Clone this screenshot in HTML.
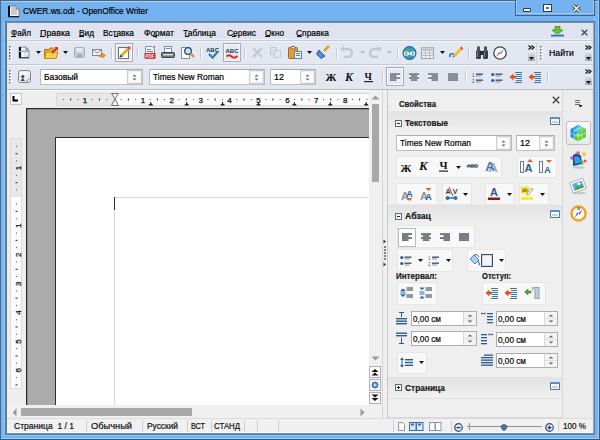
<!DOCTYPE html>
<html><head><meta charset="utf-8">
<style>
*{margin:0;padding:0;box-sizing:border-box}
html,body{width:600px;height:440px;overflow:hidden;background:#74b3f0}
body{position:relative;font-family:"Liberation Sans",sans-serif;font-size:9px;color:#000}
.a{position:absolute;display:block}
.t{position:absolute;white-space:nowrap;line-height:1;-webkit-text-stroke:0.2px currentColor}
</style></head><body>
<div class="a" style="left:0px;top:0px;width:600px;height:440px;background:#74b3f0"></div>
<div class="a" style="left:0px;top:0px;width:600px;height:1px;background:#4e6580"></div>
<div class="a" style="left:1px;top:1px;width:598px;height:1px;background:#a9d2fa"></div>
<div class="a" style="left:0px;top:0px;width:1px;height:440px;background:#4a6a90"></div>
<div class="a" style="left:3px;top:22px;width:2px;height:412px;background:#84c0fa"></div>
<div class="a" style="left:594px;top:16px;width:1px;height:418px;background:#88c6ff"></div>
<div class="a" style="left:598px;top:0px;width:1px;height:440px;background:#94ccff"></div>
<div class="a" style="left:599px;top:0px;width:1px;height:440px;background:#3a5a80"></div>
<div class="a" style="left:1px;top:435px;width:598px;height:1px;background:#84c4ff"></div>
<div class="a" style="left:1px;top:438px;width:598px;height:1px;background:#a0d0ff"></div>
<div class="a" style="left:0px;top:439px;width:600px;height:1px;background:#3a5a80"></div>
<div class="t" style="left:23px;top:7.38px;font-size:9px;color:#000;transform:scaleX(0.921);transform-origin:0 0;">CWER.ws.odt - OpenOffice Writer</div>
<div class="a" style="left:515px;top:0px;width:80px;height:16px;border:1px solid #46607e;border-top:none;background:#74b3f0"></div>
<div class="a" style="left:5px;top:21px;width:590px;height:414px;background:#5a80a8"></div>
<div class="a" style="left:6px;top:22px;width:588px;height:412px;background:#7090b4"></div>
<div class="a" style="left:7px;top:23px;width:586px;height:410px;background:#e3e7f2"></div>
<div class="a" style="left:6px;top:23px;width:1px;height:410px;background:#6c7278"></div>
<div class="a" style="left:7px;top:23px;width:586px;height:16px;background:#dfe3ef"></div>
<div class="t" style="left:11px;top:28.88px;font-size:9px;color:#000;transform:scaleX(0.904);transform-origin:0 0;">Файл</div>
<div class="t" style="left:40px;top:28.88px;font-size:9px;color:#000;transform:scaleX(0.987);transform-origin:0 0;">Правка</div>
<div class="t" style="left:79px;top:28.88px;font-size:9px;color:#000;transform:scaleX(0.921);transform-origin:0 0;">Вид</div>
<div class="t" style="left:103px;top:28.88px;font-size:9px;color:#000;transform:scaleX(0.927);transform-origin:0 0;">Вставка</div>
<div class="t" style="left:144px;top:28.88px;font-size:9px;color:#000;transform:scaleX(0.938);transform-origin:0 0;">Формат</div>
<div class="t" style="left:183px;top:28.88px;font-size:9px;color:#000;transform:scaleX(0.935);transform-origin:0 0;">Таблица</div>
<div class="t" style="left:227px;top:28.88px;font-size:9px;color:#000;transform:scaleX(0.941);transform-origin:0 0;">Сервис</div>
<div class="t" style="left:265px;top:28.88px;font-size:9px;color:#000;transform:scaleX(0.908);transform-origin:0 0;">Окно</div>
<div class="t" style="left:296px;top:28.88px;font-size:9px;color:#000;transform:scaleX(0.935);transform-origin:0 0;">Справка</div>
<div class="a" style="left:7px;top:39px;width:586px;height:1px;background:#eef0f8"></div>
<div class="a" style="left:7px;top:40px;width:586px;height:1px;background:#c6cad4"></div>
<div class="a" style="left:7px;top:41px;width:586px;height:1px;background:#f2f4fa"></div>
<div class="a" style="left:7px;top:42px;width:586px;height:22px;background:#e3e7f2"></div>
<div class="a" style="left:7px;top:64px;width:586px;height:1px;background:#c6cad4"></div>
<div class="a" style="left:7px;top:65px;width:586px;height:1px;background:#f4f6fb"></div>
<div class="a" style="left:7px;top:66px;width:586px;height:23px;background:#e3e7f2"></div>
<div class="a" style="left:7px;top:89px;width:586px;height:1px;background:#b8bbc0"></div>
<div class="a" style="left:7px;top:90px;width:586px;height:1px;background:#fdfdfd"></div>
<div class="a" style="left:7px;top:91px;width:375px;height:327px;background:#eeeeee"></div>
<div class="a" style="left:10px;top:93px;width:12px;height:12px;background:#fafafa;border:1px solid #c8c8c8"></div>
<div class="a" style="left:56px;top:93px;width:314px;height:13px;background:#fcfcfc;border:1px solid #d8d8d8"></div>
<div class="a" style="left:57px;top:94px;width:57px;height:11px;background:#e8e8e8"></div>
<div class="a" style="left:10px;top:138px;width:12px;height:251px;background:#fcfcfc;border:1px solid #dcdcdc"></div>
<div class="a" style="left:11px;top:139px;width:10px;height:58px;background:#e8e8e8"></div>
<div class="a" style="left:26px;top:108px;width:343px;height:297px;background:#ababab"></div>
<div class="a" style="left:26px;top:108px;width:343px;height:1px;background:#2a2a2a"></div>
<div class="a" style="left:26px;top:109px;width:343px;height:1px;background:#8a8a8a"></div>
<div class="a" style="left:26px;top:108px;width:1px;height:297px;background:#2a2a2a"></div>
<div class="a" style="left:27px;top:109px;width:1px;height:296px;background:#8a8a8a"></div>
<div class="a" style="left:55px;top:137px;width:314px;height:268px;background:#ffffff"></div>
<div class="a" style="left:55px;top:137px;width:314px;height:1px;background:#2e2e2e"></div>
<div class="a" style="left:55px;top:137px;width:1px;height:268px;background:#2e2e2e"></div>
<div class="a" style="left:114px;top:197px;width:255px;height:1px;background:#d6d6d6"></div>
<div class="a" style="left:114px;top:197px;width:1px;height:208px;background:#d6d6d6"></div>
<div class="a" style="left:114px;top:197px;width:1px;height:13px;background:#303030"></div>
<div class="a" style="left:369px;top:90px;width:13px;height:328px;background:#f0f0f0"></div>
<div class="a" style="left:372px;top:104px;width:7px;height:78px;background:#a8a8a8"></div>
<div class="a" style="left:7px;top:405px;width:362px;height:13px;background:#f0f0f0"></div>
<div class="a" style="left:21px;top:408px;width:171px;height:8px;background:#a8a8a8"></div>
<div class="a" style="left:382px;top:90px;width:211px;height:328px;background:#f0f0f0"></div>
<div class="a" style="left:382px;top:90px;width:1px;height:328px;background:#d4d4d4"></div>
<div class="a" style="left:387px;top:90px;width:1px;height:328px;background:#c8c8c8"></div>
<div class="a" style="left:388px;top:90px;width:175px;height:327px;background:#efefef"></div>
<div class="a" style="left:562px;top:90px;width:1px;height:328px;background:#d8d8d8"></div>
<div class="a" style="left:563px;top:90px;width:30px;height:328px;background:#ececec"></div>
<div class="a" style="left:592px;top:90px;width:1px;height:328px;background:#e4e4e4"></div>
<div class="a" style="left:593px;top:23px;width:1px;height:410px;background:#9aa8b8"></div>
<div class="a" style="left:388px;top:417px;width:175px;height:1px;background:#d8d8d8"></div>
<div class="t" style="left:399px;top:99.88px;font-size:9px;color:#1a1a1a;font-weight:bold;transform:scaleX(0.865);transform-origin:0 0;">Свойства</div>
<div class="a" style="left:388px;top:111px;width:174px;height:20px;background:linear-gradient(#e2e2e2,#f0f0f0)"></div>
<div class="a" style="left:395px;top:120px;width:7px;height:7px;border:1px solid #5a6a80;background:#f8f8f8"></div>
<div class="a" style="left:397px;top:123px;width:3px;height:1px;background:#1a2a40"></div>
<div class="t" style="left:405px;top:119.38px;font-size:9px;color:#1a1a1a;font-weight:bold;transform:scaleX(0.906);transform-origin:0 0;">Текстовые</div>
<div class="a" style="left:550px;top:117px;width:10px;height:8px;border:1px solid #5a74a8;border-top:2px solid #5a8ad8;background:#fafcff;border-radius:1px"></div>
<div class="a" style="left:552px;top:121px;width:6px;height:2px;background:#c8d0dc"></div>
<div class="a" style="left:388px;top:205px;width:174px;height:20px;background:linear-gradient(#e2e2e2,#f0f0f0)"></div>
<div class="a" style="left:395px;top:213px;width:7px;height:7px;border:1px solid #5a6a80;background:#f8f8f8"></div>
<div class="a" style="left:397px;top:216px;width:3px;height:1px;background:#1a2a40"></div>
<div class="t" style="left:405px;top:212.38px;font-size:9px;color:#1a1a1a;font-weight:bold;transform:scaleX(0.973);transform-origin:0 0;">Абзац</div>
<div class="a" style="left:550px;top:210px;width:10px;height:8px;border:1px solid #5a74a8;border-top:2px solid #5a8ad8;background:#fafcff;border-radius:1px"></div>
<div class="a" style="left:552px;top:214px;width:6px;height:2px;background:#c8d0dc"></div>
<div class="a" style="left:388px;top:377px;width:174px;height:20px;background:linear-gradient(#e2e2e2,#f0f0f0)"></div>
<div class="a" style="left:395px;top:384px;width:7px;height:7px;border:1px solid #5a6a80;background:#f8f8f8"></div>
<div class="a" style="left:397px;top:387px;width:3px;height:1px;background:#1a2a40"></div>
<div class="a" style="left:398px;top:386px;width:1px;height:3px;background:#1a2a40"></div>
<div class="t" style="left:405px;top:384.38px;font-size:9px;color:#1a1a1a;font-weight:bold;transform:scaleX(0.930);transform-origin:0 0;">Страница</div>
<div class="a" style="left:550px;top:382px;width:10px;height:8px;border:1px solid #5a74a8;border-top:2px solid #5a8ad8;background:#fafcff;border-radius:1px"></div>
<div class="a" style="left:552px;top:386px;width:6px;height:2px;background:#c8d0dc"></div>
<div class="a" style="left:388px;top:398px;width:174px;height:1px;background:#e2e2e2"></div>
<div class="a" style="left:7px;top:418px;width:586px;height:15px;background:#f0f0f0"></div>
<div class="a" style="left:7px;top:432px;width:586px;height:1px;background:#fcfcfc"></div>
<div class="a" style="left:7px;top:418px;width:586px;height:1px;background:#dcdcdc"></div>
<div class="a" style="left:86px;top:420px;width:1px;height:12px;background:#cdd0d4"></div>
<div class="a" style="left:142px;top:420px;width:1px;height:12px;background:#cdd0d4"></div>
<div class="a" style="left:187px;top:420px;width:1px;height:12px;background:#cdd0d4"></div>
<div class="a" style="left:211px;top:420px;width:1px;height:12px;background:#cdd0d4"></div>
<div class="a" style="left:244px;top:420px;width:1px;height:12px;background:#cdd0d4"></div>
<div class="a" style="left:257px;top:420px;width:1px;height:12px;background:#cdd0d4"></div>
<div class="a" style="left:278px;top:420px;width:1px;height:12px;background:#cdd0d4"></div>
<div class="a" style="left:393px;top:420px;width:1px;height:12px;background:#cdd0d4"></div>
<div class="a" style="left:451px;top:420px;width:1px;height:12px;background:#cdd0d4"></div>
<div class="a" style="left:558px;top:420px;width:1px;height:12px;background:#cdd0d4"></div>
<div class="t" style="left:14px;top:422.38px;font-size:9px;color:#101010;transform:scaleX(0.948);transform-origin:0 0;">Страница&nbsp; 1 / 1</div>
<div class="t" style="left:91px;top:422.38px;font-size:9px;color:#101010;transform:scaleX(1.031);transform-origin:0 0;">Обычный</div>
<div class="t" style="left:147px;top:422.38px;font-size:9px;color:#101010;transform:scaleX(0.928);transform-origin:0 0;">Русский</div>
<div class="t" style="left:191px;top:422.38px;font-size:9px;color:#101010;transform:scaleX(0.804);transform-origin:0 0;">ВСТ</div>
<div class="t" style="left:214px;top:422.38px;font-size:9px;color:#101010;transform:scaleX(0.867);transform-origin:0 0;">СТАНД</div>
<div class="t" style="left:563px;top:422.38px;font-size:9px;color:#101010;transform:scaleX(0.901);transform-origin:0 0;">100 %</div>
<div class="a" style="left:9px;top:46px;width:2px;height:2px;background:linear-gradient(135deg,#5a5e66 50%,#b8bcc4 50%);box-shadow:1px 1px 0 #fff"></div>
<div class="a" style="left:9px;top:49px;width:2px;height:2px;background:linear-gradient(135deg,#5a5e66 50%,#b8bcc4 50%);box-shadow:1px 1px 0 #fff"></div>
<div class="a" style="left:9px;top:52px;width:2px;height:2px;background:linear-gradient(135deg,#5a5e66 50%,#b8bcc4 50%);box-shadow:1px 1px 0 #fff"></div>
<div class="a" style="left:9px;top:55px;width:2px;height:2px;background:linear-gradient(135deg,#5a5e66 50%,#b8bcc4 50%);box-shadow:1px 1px 0 #fff"></div>
<div class="a" style="left:9px;top:58px;width:2px;height:2px;background:linear-gradient(135deg,#5a5e66 50%,#b8bcc4 50%);box-shadow:1px 1px 0 #fff"></div>
<svg class="a" style="left:18px;top:46px;" width="12" height="13" viewBox="0 0 12 13"><path d="M1 1H8L11 4V12H1Z" fill="#d8e0ea" stroke="#7a8490" stroke-width="0.8"/><rect x="1" y="1" width="2" height="4" fill="#0a1018"/><rect x="1" y="6" width="2" height="6" fill="#0a1018"/><rect x="1" y="11.2" width="10" height="1" fill="#303840"/><rect x="3.5" y="2" width="4" height="1.5" fill="#f8f8f8"/><rect x="3.5" y="6.5" width="2.5" height="4.5" fill="#f8f8f8"/><rect x="7" y="7" width="3" height="2" fill="#f0f4f8"/><path d="M8 1V4H11" fill="#a8b0b8" stroke="#7a8490" stroke-width="0.8"/><path d="M3 5.5L10 5.5" stroke="#8a949e" stroke-width="0.8"/></svg>
<svg class="a" style="left:36px;top:51px;" width="5" height="3" viewBox="0 0 5 3"><path d="M0 0H5L2.5 3Z" fill="#111"/></svg>
<svg class="a" style="left:44px;top:46px;" width="15" height="13" viewBox="0 0 15 13"><path d="M0.5 3.5H5L6 2H9V12.5H0.5Z" fill="#e2b030" stroke="#b07810"/><path d="M2 6H14L12 12.5H0.5Z" fill="#f8d050" stroke="#c08818"/><path d="M8 7L13 2" stroke="#e03010" stroke-width="2"/><path d="M10 1H14V5Z" fill="#e03010"/></svg>
<svg class="a" style="left:63px;top:51px;" width="5" height="3" viewBox="0 0 5 3"><path d="M0 0H5L2.5 3Z" fill="#111"/></svg>
<svg class="a" style="left:74px;top:47px;" width="11" height="11" viewBox="0 0 11 11"><rect x="0.5" y="0.5" width="10" height="10" rx="1" fill="#c8ccd4" stroke="#a8acb4"/><rect x="2.5" y="1" width="6" height="4" fill="#e8eaee"/><rect x="3" y="7" width="5" height="3.5" fill="#a8acb4"/></svg>
<svg class="a" style="left:92px;top:49px;" width="14" height="10" viewBox="0 0 14 10"><rect x="0.5" y="0.5" width="9" height="6" fill="#f0f0f0" stroke="#808890"/><path d="M0.5 0.5L5 4L9.5 0.5" fill="none" stroke="#808890"/><path d="M7 6H10V4L13.5 6.5L10 9V7.5H7Z" fill="#f0a020" stroke="#c07000" stroke-width="0.6"/></svg>
<div class="a" style="left:111px;top:48px;width:1px;height:11px;background:#c4c8d2;box-shadow:1px 0 0 #fff"></div>
<div class="a" style="left:115px;top:43px;width:18px;height:19px;border:1px solid #a8acb8;background:#e6e9f1;box-shadow:inset 0 0 0 1px #f8f9fc"></div>
<svg class="a" style="left:117px;top:46px;" width="14" height="13" viewBox="0 0 14 13"><rect x="1.5" y="1.5" width="10" height="11" fill="#fafafa" stroke="#6a7480"/><rect x="3" y="9" width="3" height="2" fill="#3060b0"/><path d="M4 10L11 3" stroke="#e0b020" stroke-width="3"/><path d="M11 3L13 1" stroke="#e04060" stroke-width="3"/><path d="M3 11L4.5 9.5" stroke="#303030" stroke-width="1.5"/></svg>
<div class="a" style="left:137px;top:48px;width:1px;height:11px;background:#c4c8d2;box-shadow:1px 0 0 #fff"></div>
<svg class="a" style="left:144px;top:46px;" width="12" height="13" viewBox="0 0 12 13"><path d="M1.5 0.5H8L10.5 3V12.5H1.5Z" fill="#fff" stroke="#8090a0"/><rect x="3" y="3" width="4" height="1" fill="#5080c0"/><rect x="3" y="5" width="6" height="1" fill="#5080c0"/><rect x="0.5" y="7" width="11" height="5.5" fill="#d42020"/><path d="M9 0H11V2Z" fill="#e02020"/><text x="6" y="11.6" font-size="4.5" font-family="Liberation Sans" font-weight="bold" fill="#fff" text-anchor="middle">PDF</text></svg>
<svg class="a" style="left:161px;top:46px;" width="14" height="13" viewBox="0 0 14 13"><rect x="3.5" y="0.5" width="7" height="6" fill="#fff" stroke="#8090a0"/><rect x="4.5" y="2" width="5" height="1" fill="#6090c8"/><rect x="0.5" y="6.5" width="13" height="5" rx="1" fill="#707478" stroke="#404448"/><rect x="2" y="8" width="10" height="1.5" fill="#d8dadc"/><rect x="10" y="9.5" width="2" height="1" fill="#40c040"/></svg>
<svg class="a" style="left:180px;top:46px;" width="15" height="13" viewBox="0 0 15 13"><rect x="1.5" y="1.5" width="8" height="11" fill="#fafafa" stroke="#8a94a0"/><circle cx="8" cy="5" r="3.3" fill="#c8e0f4" stroke="#2a4a6a" stroke-width="1.3"/><path d="M10.3 7.3L14 11" stroke="#d09020" stroke-width="2"/></svg>
<div class="a" style="left:200px;top:48px;width:1px;height:11px;background:#c4c8d2;box-shadow:1px 0 0 #fff"></div>
<svg class="a" style="left:205px;top:46px;" width="15" height="13" viewBox="0 0 15 13"><text x="7.5" y="5.5" font-size="6" font-family="Liberation Sans" font-weight="bold" fill="#223344" text-anchor="middle">ABC</text><path d="M4 8L7.5 11.5L13 5.5" fill="none" stroke="#1060b0" stroke-width="2"/><path d="M4.5 8.3L7.5 11L12.5 5.8" fill="none" stroke="#40c0f0" stroke-width="0.8"/></svg>
<div class="a" style="left:223px;top:43px;width:18px;height:19px;border:1px solid #a8acb8;background:#e6e9f1;box-shadow:inset 0 0 0 1px #f8f9fc"></div>
<svg class="a" style="left:225px;top:47px;" width="14" height="12" viewBox="0 0 14 12"><text x="7" y="5.8" font-size="6" font-family="Liberation Sans" font-weight="bold" fill="#223344" text-anchor="middle">ABC</text><path d="M1.5 9.5Q4 7 6.5 9.5Q9 12 12.5 9" fill="none" stroke="#e02010" stroke-width="1.8"/></svg>
<div class="a" style="left:244px;top:48px;width:1px;height:11px;background:#c4c8d2;box-shadow:1px 0 0 #fff"></div>
<svg class="a" style="left:251px;top:47px;" width="13" height="11" viewBox="0 0 13 11"><path d="M2 1L11 10M11 1L2 10" stroke="#c4c8d0" stroke-width="2.4"/></svg>
<svg class="a" style="left:270px;top:47px;" width="12" height="11" viewBox="0 0 12 11"><rect x="0.5" y="0.5" width="6" height="7" fill="#dcdfe4" stroke="#c4c8d0"/><rect x="4.5" y="3.5" width="6" height="7" fill="#e4e6ea" stroke="#c4c8d0"/></svg>
<svg class="a" style="left:288px;top:46px;" width="14" height="13" viewBox="0 0 14 13"><rect x="0.5" y="1.5" width="9" height="11" rx="1" fill="#e0a030" stroke="#a06818"/><rect x="3" y="0.5" width="4" height="2.5" rx="0.8" fill="#f0f0f0" stroke="#606468"/><rect x="6.5" y="5.5" width="7" height="7" fill="#f0f6fc" stroke="#6080a8"/><rect x="8" y="7" width="4" height="1" fill="#4a80c0"/><rect x="8" y="9" width="4" height="1" fill="#4a80c0"/></svg>
<svg class="a" style="left:307px;top:51px;" width="5" height="3" viewBox="0 0 5 3"><path d="M0 0H5L2.5 3Z" fill="#111"/></svg>
<svg class="a" style="left:316px;top:45px;" width="14" height="14" viewBox="0 0 14 14"><path d="M8 6L13 1" stroke="#e0a020" stroke-width="2.5"/><path d="M3 5L9 11L5 13.5L0.5 9Z" fill="#3a78d0" stroke="#1a50a0" stroke-width="0.8"/><path d="M2 8L6 12M3.5 6.5L7.5 10.5" stroke="#a0c8f0" stroke-width="0.7"/></svg>
<div class="a" style="left:336px;top:48px;width:1px;height:11px;background:#c4c8d2;box-shadow:1px 0 0 #fff"></div>
<svg class="a" style="left:340px;top:46px;" width="14" height="12" viewBox="0 0 14 12"><path d="M3 3H8A4 4 0 0 1 8 11H4" fill="none" stroke="#c4c8d0" stroke-width="2.4"/><path d="M0 3L4 0V6Z" fill="#c4c8d0"/></svg>
<svg class="a" style="left:360px;top:51px;" width="5" height="3" viewBox="0 0 5 3"><path d="M0 0H5L2.5 3Z" fill="#b8bcc4"/></svg>
<svg class="a" style="left:368px;top:46px;" width="14" height="12" viewBox="0 0 14 12"><path d="M11 3H6A4 4 0 0 0 6 11H10" fill="none" stroke="#c4c8d0" stroke-width="2.4"/><path d="M14 3L10 0V6Z" fill="#c4c8d0"/></svg>
<svg class="a" style="left:387px;top:51px;" width="5" height="3" viewBox="0 0 5 3"><path d="M0 0H5L2.5 3Z" fill="#b8bcc4"/></svg>
<div class="a" style="left:397px;top:48px;width:1px;height:11px;background:#c4c8d2;box-shadow:1px 0 0 #fff"></div>
<svg class="a" style="left:402px;top:46px;" width="15" height="14" viewBox="0 0 15 14"><circle cx="7.5" cy="7" r="6.5" fill="#3a90c8" stroke="#1a5a88"/><path d="M3 4Q6 2 8 4T13 5" fill="#70c030"/><path d="M2 9Q5 12 9 10" fill="#60b030"/><rect x="2.5" y="6" width="4" height="3" rx="1" fill="none" stroke="#fff" stroke-width="1.2"/><rect x="8.5" y="6" width="4" height="3" rx="1" fill="none" stroke="#fff" stroke-width="1.2"/><path d="M5 7.5H10" stroke="#fff"/></svg>
<svg class="a" style="left:421px;top:47px;" width="13" height="12" viewBox="0 0 13 12"><rect x="0.5" y="0.5" width="12" height="11" fill="#f4f4f4" stroke="#9ca0a8"/><path d="M0.5 3.5H12.5M0.5 6H12.5M0.5 8.5H12.5M4.5 0.5V11.5M8.5 0.5V11.5" stroke="#a8acb4" stroke-width="0.8"/><rect x="0.5" y="0.5" width="12" height="3" fill="#c8ccd2"/></svg>
<svg class="a" style="left:440px;top:51px;" width="5" height="3" viewBox="0 0 5 3"><path d="M0 0H5L2.5 3Z" fill="#111"/></svg>
<svg class="a" style="left:449px;top:46px;" width="14" height="13" viewBox="0 0 14 13"><path d="M1 11Q0 7 4 8Q6 9 4 11" fill="none" stroke="#2a70d0" stroke-width="1.6"/><path d="M5 10L12 3" stroke="#f0c020" stroke-width="3"/><path d="M12 3L13.5 1.5" stroke="#e04060" stroke-width="3"/></svg>
<div class="a" style="left:468px;top:48px;width:1px;height:11px;background:#c4c8d2;box-shadow:1px 0 0 #fff"></div>
<svg class="a" style="left:475px;top:46px;" width="14" height="13" viewBox="0 0 14 13"><rect x="1" y="4" width="5" height="9" rx="1.5" fill="#3a3c40"/><rect x="8" y="4" width="5" height="9" rx="1.5" fill="#3a3c40"/><rect x="2" y="0.5" width="3" height="5" fill="#505458"/><rect x="9" y="0.5" width="3" height="5" fill="#505458"/><rect x="5" y="5" width="4" height="4" fill="#2a2c30"/><rect x="1.8" y="6" width="1" height="5" fill="#8a8e94"/><rect x="8.8" y="6" width="1" height="5" fill="#8a8e94"/></svg>
<svg class="a" style="left:493px;top:46px;" width="14" height="14" viewBox="0 0 14 14"><circle cx="7" cy="7" r="6.2" fill="#f8f8f8" stroke="#404850" stroke-width="1.3"/><path d="M7 7L11 3L8 8Z" fill="#2a60d0"/><path d="M7 7L3 11L6 6Z" fill="#e02020"/></svg>
<svg class="a" style="left:528px;top:45px;" width="7" height="5" viewBox="0 0 7 5"><path d="M0.5 0.5L3 2.5L0.5 4.5M3.5 0.5L6 2.5L3.5 4.5" fill="none" stroke="#111" stroke-width="1.2"/></svg>
<div class="a" style="left:528px;top:53px;width:7px;height:8px;background:linear-gradient(#d8dade,#a8acb2)"></div>
<svg class="a" style="left:529px;top:57px;" width="5" height="3" viewBox="0 0 5 3"><path d="M0 0H5L2.5 3Z" fill="#111"/></svg>
<div class="a" style="left:536px;top:42px;width:1px;height:23px;background:#cfd3dc"></div>
<div class="a" style="left:540px;top:46px;width:2px;height:2px;background:linear-gradient(135deg,#5a5e66 50%,#b8bcc4 50%);box-shadow:1px 1px 0 #fff"></div>
<div class="a" style="left:540px;top:49px;width:2px;height:2px;background:linear-gradient(135deg,#5a5e66 50%,#b8bcc4 50%);box-shadow:1px 1px 0 #fff"></div>
<div class="a" style="left:540px;top:52px;width:2px;height:2px;background:linear-gradient(135deg,#5a5e66 50%,#b8bcc4 50%);box-shadow:1px 1px 0 #fff"></div>
<div class="a" style="left:540px;top:55px;width:2px;height:2px;background:linear-gradient(135deg,#5a5e66 50%,#b8bcc4 50%);box-shadow:1px 1px 0 #fff"></div>
<div class="a" style="left:540px;top:58px;width:2px;height:2px;background:linear-gradient(135deg,#5a5e66 50%,#b8bcc4 50%);box-shadow:1px 1px 0 #fff"></div>
<div class="t" style="left:549px;top:49.38px;font-size:9px;color:#000;transform:scaleX(0.973);transform-origin:0 0;">Найти</div>
<svg class="a" style="left:585px;top:45px;" width="7" height="5" viewBox="0 0 7 5"><path d="M0.5 0.5L3 2.5L0.5 4.5M3.5 0.5L6 2.5L3.5 4.5" fill="none" stroke="#111" stroke-width="1.2"/></svg>
<div class="a" style="left:585px;top:53px;width:7px;height:8px;background:linear-gradient(#d8dade,#a8acb2)"></div>
<svg class="a" style="left:586px;top:57px;" width="5" height="3" viewBox="0 0 5 3"><path d="M0 0H5L2.5 3Z" fill="#111"/></svg>
<div class="a" style="left:9px;top:70px;width:2px;height:2px;background:linear-gradient(135deg,#5a5e66 50%,#b8bcc4 50%);box-shadow:1px 1px 0 #fff"></div>
<div class="a" style="left:9px;top:73px;width:2px;height:2px;background:linear-gradient(135deg,#5a5e66 50%,#b8bcc4 50%);box-shadow:1px 1px 0 #fff"></div>
<div class="a" style="left:9px;top:76px;width:2px;height:2px;background:linear-gradient(135deg,#5a5e66 50%,#b8bcc4 50%);box-shadow:1px 1px 0 #fff"></div>
<div class="a" style="left:9px;top:79px;width:2px;height:2px;background:linear-gradient(135deg,#5a5e66 50%,#b8bcc4 50%);box-shadow:1px 1px 0 #fff"></div>
<div class="a" style="left:9px;top:82px;width:2px;height:2px;background:linear-gradient(135deg,#5a5e66 50%,#b8bcc4 50%);box-shadow:1px 1px 0 #fff"></div>
<svg class="a" style="left:18px;top:70px;" width="13" height="13" viewBox="0 0 13 13"><rect x="0.5" y="0.5" width="12" height="12" rx="2" fill="#e8eaee" stroke="#808890"/><rect x="2" y="2" width="9" height="3" fill="#f8f8f8"/><circle cx="4.8" cy="6.5" r="1.5" fill="#404448"/><path d="M2.5 11L4.8 8L7 11Z" fill="#404448"/><path d="M8 12L12 8" stroke="#808890"/></svg>
<div class="a" style="left:40px;top:69px;width:103px;height:16px;background:#fff;border:1px solid #b9bcc2;border-top-color:#a9acb2"></div>
<div class="a" style="left:127px;top:70px;width:15px;height:14px;background:#fcfcfc;border:1px solid #cfcfcf;box-shadow:inset 0 0 0 1px #eeeeee"></div>
<svg class="a" style="left:132.0px;top:73.5px;" width="5" height="7" viewBox="0 0 5 7"><path d="M0.5 2.5L2.5 0.5L4.5 2.5Z" fill="#666"/><path d="M0.5 4.5L2.5 6.5L4.5 4.5Z" fill="#666"/></svg>
<div class="t" style="left:44px;top:73.38px;font-size:9px;color:#000;transform:scaleX(0.941);transform-origin:0 0;">Базовый</div>
<div class="a" style="left:149px;top:69px;width:116px;height:16px;background:#fff;border:1px solid #b9bcc2;border-top-color:#a9acb2"></div>
<div class="a" style="left:249px;top:70px;width:15px;height:14px;background:#fcfcfc;border:1px solid #cfcfcf;box-shadow:inset 0 0 0 1px #eeeeee"></div>
<svg class="a" style="left:254.0px;top:73.5px;" width="5" height="7" viewBox="0 0 5 7"><path d="M0.5 2.5L2.5 0.5L4.5 2.5Z" fill="#666"/><path d="M0.5 4.5L2.5 6.5L4.5 4.5Z" fill="#666"/></svg>
<div class="t" style="left:153px;top:73.38px;font-size:9px;color:#000;transform:scaleX(0.932);transform-origin:0 0;">Times New Roman</div>
<div class="a" style="left:270px;top:69px;width:46px;height:16px;background:#fff;border:1px solid #b9bcc2;border-top-color:#a9acb2"></div>
<div class="a" style="left:300px;top:70px;width:15px;height:14px;background:#fcfcfc;border:1px solid #cfcfcf;box-shadow:inset 0 0 0 1px #eeeeee"></div>
<svg class="a" style="left:305.0px;top:73.5px;" width="5" height="7" viewBox="0 0 5 7"><path d="M0.5 2.5L2.5 0.5L4.5 2.5Z" fill="#666"/><path d="M0.5 4.5L2.5 6.5L4.5 4.5Z" fill="#666"/></svg>
<div class="t" style="left:274px;top:73.38px;font-size:9px;color:#000;transform:scaleX(0.999);transform-origin:0 0;">12</div>
<svg class="a" style="left:325px;top:72px;" width="12" height="10" viewBox="0 0 12 10"><text x="6" y="9" font-size="11" font-family="Liberation Serif" font-weight="bold" fill="#111" text-anchor="middle">Ж</text></svg>
<svg class="a" style="left:345px;top:71px;" width="11" height="11" viewBox="0 0 11 11"><text x="0" y="10" font-size="12" font-family="Liberation Serif" font-style="italic" font-weight="bold" fill="#111">K</text></svg>
<svg class="a" style="left:364px;top:70px;" width="10" height="13" viewBox="0 0 10 13"><text x="0.5" y="9.5" font-size="10" font-family="Liberation Serif" font-weight="bold" fill="#111">Ч</text><rect x="0" y="11" width="9" height="1.2" fill="#222"/></svg>
<div class="a" style="left:382px;top:71px;width:1px;height:12px;background:#c4c8d2;box-shadow:1px 0 0 #fff"></div>
<div class="a" style="left:386px;top:67px;width:18px;height:19px;border:1px solid #a8acb8;background:#e6e9f1;box-shadow:inset 0 0 0 1px #f8f9fc"></div>
<svg class="a" style="left:390px;top:73px;" width="10" height="8" viewBox="0 0 10 8"><rect x="0" y="0" width="10" height="8" fill="#fff" opacity="0.7"/><rect x="0" y="0.3" width="10" height="1.5" fill="#646c76"/><rect x="0" y="2.3" width="6.5" height="1.5" fill="#646c76"/><rect x="0" y="4.3" width="10" height="1.5" fill="#646c76"/><rect x="0" y="6.3" width="6.5" height="1.5" fill="#646c76"/></svg>
<svg class="a" style="left:409px;top:73px;" width="10" height="8" viewBox="0 0 10 8"><rect x="0" y="0" width="10" height="8" fill="#fff" opacity="0.7"/><rect x="0" y="0.3" width="10" height="1.5" fill="#646c76"/><rect x="1.8" y="2.3" width="6.5" height="1.5" fill="#646c76"/><rect x="0" y="4.3" width="10" height="1.5" fill="#646c76"/><rect x="1.8" y="6.3" width="6.5" height="1.5" fill="#646c76"/></svg>
<svg class="a" style="left:428px;top:73px;" width="10" height="8" viewBox="0 0 10 8"><rect x="0" y="0" width="10" height="8" fill="#fff" opacity="0.7"/><rect x="0" y="0.3" width="10" height="1.5" fill="#646c76"/><rect x="3.5" y="2.3" width="6.5" height="1.5" fill="#646c76"/><rect x="0" y="4.3" width="10" height="1.5" fill="#646c76"/><rect x="3.5" y="6.3" width="6.5" height="1.5" fill="#646c76"/></svg>
<svg class="a" style="left:448px;top:73px;" width="10" height="8" viewBox="0 0 10 8"><rect x="0" y="0" width="10" height="8" fill="#fff" opacity="0.7"/><rect x="0" y="0.3" width="10" height="1.5" fill="#646c76"/><rect x="0" y="2.3" width="10" height="1.5" fill="#646c76"/><rect x="0" y="4.3" width="10" height="1.5" fill="#646c76"/><rect x="0" y="6.3" width="10" height="1.5" fill="#646c76"/></svg>
<div class="a" style="left:465px;top:71px;width:1px;height:12px;background:#c4c8d2;box-shadow:1px 0 0 #fff"></div>
<svg class="a" style="left:472px;top:72px;" width="12" height="11" viewBox="0 0 12 11"><text x="0" y="4.5" font-size="4.5" font-family="Liberation Sans" fill="#2a60a0">1</text><text x="0" y="10.5" font-size="4.5" font-family="Liberation Sans" fill="#2a60a0">2</text><rect x="4" y="1.5" width="7" height="1.4" fill="#4a5460"/><rect x="4" y="3.5" width="5" height="1" fill="#8a94a0"/><rect x="4" y="7.5" width="7" height="1.4" fill="#4a5460"/><rect x="4" y="9.5" width="5" height="1" fill="#8a94a0"/></svg>
<svg class="a" style="left:491px;top:72px;" width="12" height="11" viewBox="0 0 12 11"><circle cx="1.8" cy="2.5" r="1.6" fill="#2a5a90"/><circle cx="1.8" cy="8.5" r="1.6" fill="#2a5a90"/><rect x="4.5" y="1.5" width="7" height="1.4" fill="#4a5460"/><rect x="4.5" y="3.5" width="5" height="1" fill="#8a94a0"/><rect x="4.5" y="7.5" width="7" height="1.4" fill="#4a5460"/><rect x="4.5" y="9.5" width="5" height="1" fill="#8a94a0"/></svg>
<svg class="a" style="left:509px;top:71px;" width="14" height="12" viewBox="0 0 14 12"><path d="M0.5 6L4.5 2.5V9.5Z" fill="#e05010"/><rect x="3" y="4.8" width="4" height="2.4" fill="#e05010"/><path d="M6 1.5H13M7 3.5H13M7 5.5H13M7 7.5H13M7 9.5H13M6 11.5H13" stroke="#2a80d0" stroke-width="1"/><path d="M6 1.5H13M6 11.5H13" stroke="#606870" stroke-width="1"/></svg>
<svg class="a" style="left:528px;top:71px;" width="14" height="12" viewBox="0 0 14 12"><path d="M0.5 6L4.5 2.5V9.5Z" fill="#e05010"/><rect x="3" y="4.8" width="4" height="2.4" fill="#e05010"/><path d="M6 1.5H13M7 3.5H13M7 5.5H13M7 7.5H13M7 9.5H13M6 11.5H13" stroke="#2a80d0" stroke-width="1"/><path d="M6 1.5H13M6 11.5H13" stroke="#606870" stroke-width="1"/></svg>
<div class="a" style="left:547px;top:71px;width:1px;height:12px;background:#c4c8d2;box-shadow:1px 0 0 #fff"></div>
<svg class="a" style="left:585px;top:69px;" width="7" height="5" viewBox="0 0 7 5"><path d="M0.5 0.5L3 2.5L0.5 4.5M3.5 0.5L6 2.5L3.5 4.5" fill="none" stroke="#111" stroke-width="1.2"/></svg>
<div class="a" style="left:585px;top:77px;width:7px;height:8px;background:linear-gradient(#d8dade,#a8acb2)"></div>
<svg class="a" style="left:586px;top:81px;" width="5" height="3" viewBox="0 0 5 3"><path d="M0 0H5L2.5 3Z" fill="#111"/></svg>
<svg class="a" style="left:12px;top:95px;" width="8" height="8" viewBox="0 0 8 8"><path d="M1.5 1V5.5H6" fill="none" stroke="#000" stroke-width="2"/></svg>
<svg class="a" style="left:56px;top:93px;" width="314" height="13" viewBox="0 0 314 13"><path d="M55.5 0.5H62.5L59 6L62.5 12.5H55.5L59 6Z" fill="#f4f4f4" stroke="#707070" transform="translate(0,0)"/><rect x="6.9" y="6" width="1" height="1" fill="#505050"/><rect x="14.1" y="5.5" width="1.2" height="2" fill="#404040"/><rect x="21.4" y="6" width="1" height="1" fill="#505050"/><rect x="35.8" y="6" width="1" height="1" fill="#505050"/><rect x="42.9" y="5.5" width="1.2" height="2" fill="#404040"/><rect x="50.3" y="6" width="1" height="1" fill="#505050"/><rect x="64.7" y="6" width="1" height="1" fill="#505050"/><rect x="71.8" y="5.5" width="1.2" height="2" fill="#404040"/><rect x="79.2" y="6" width="1" height="1" fill="#505050"/><rect x="93.6" y="6" width="1" height="1" fill="#505050"/><rect x="100.8" y="5.5" width="1.2" height="2" fill="#404040"/><rect x="108.1" y="6" width="1" height="1" fill="#505050"/><rect x="122.5" y="6" width="1" height="1" fill="#505050"/><rect x="129.7" y="5.5" width="1.2" height="2" fill="#404040"/><rect x="137.0" y="6" width="1" height="1" fill="#505050"/><rect x="151.4" y="6" width="1" height="1" fill="#505050"/><rect x="158.5" y="5.5" width="1.2" height="2" fill="#404040"/><rect x="165.9" y="6" width="1" height="1" fill="#505050"/><rect x="180.3" y="6" width="1" height="1" fill="#505050"/><rect x="187.4" y="5.5" width="1.2" height="2" fill="#404040"/><rect x="194.8" y="6" width="1" height="1" fill="#505050"/><rect x="209.2" y="6" width="1" height="1" fill="#505050"/><rect x="216.3" y="5.5" width="1.2" height="2" fill="#404040"/><rect x="223.7" y="6" width="1" height="1" fill="#505050"/><rect x="238.1" y="6" width="1" height="1" fill="#505050"/><rect x="245.3" y="5.5" width="1.2" height="2" fill="#404040"/><rect x="252.6" y="6" width="1" height="1" fill="#505050"/><rect x="267.0" y="6" width="1" height="1" fill="#505050"/><rect x="274.1" y="5.5" width="1.2" height="2" fill="#404040"/><rect x="281.5" y="6" width="1" height="1" fill="#505050"/><rect x="295.9" y="6" width="1" height="1" fill="#505050"/><rect x="303.0" y="5.5" width="1.2" height="2" fill="#404040"/><rect x="310.4" y="6" width="1" height="1" fill="#505050"/><text x="29.1" y="9.5" font-size="8" font-family="Liberation Sans" fill="#0a1020" stroke="#0a1020" stroke-width="0.25" text-anchor="middle">1</text><text x="86.9" y="9.5" font-size="8" font-family="Liberation Sans" fill="#0a1020" stroke="#0a1020" stroke-width="0.25" text-anchor="middle">1</text><text x="115.8" y="9.5" font-size="8" font-family="Liberation Sans" fill="#0a1020" stroke="#0a1020" stroke-width="0.25" text-anchor="middle">2</text><text x="144.7" y="9.5" font-size="8" font-family="Liberation Sans" fill="#0a1020" stroke="#0a1020" stroke-width="0.25" text-anchor="middle">3</text><text x="173.6" y="9.5" font-size="8" font-family="Liberation Sans" fill="#0a1020" stroke="#0a1020" stroke-width="0.25" text-anchor="middle">4</text><text x="202.5" y="9.5" font-size="8" font-family="Liberation Sans" fill="#0a1020" stroke="#0a1020" stroke-width="0.25" text-anchor="middle">5</text><text x="231.4" y="9.5" font-size="8" font-family="Liberation Sans" fill="#0a1020" stroke="#0a1020" stroke-width="0.25" text-anchor="middle">6</text><text x="260.3" y="9.5" font-size="8" font-family="Liberation Sans" fill="#0a1020" stroke="#0a1020" stroke-width="0.25" text-anchor="middle">7</text><text x="289.2" y="9.5" font-size="8" font-family="Liberation Sans" fill="#0a1020" stroke="#0a1020" stroke-width="0.25" text-anchor="middle">8</text><path d="M94.8 9V11M92.8 12H96.8" stroke="#202020" stroke-width="1"/><path d="M92.8 12L94.8 10L96.8 12Z" fill="#202020"/><path d="M130.7 9V11M128.7 12H132.7" stroke="#202020" stroke-width="1"/><path d="M128.7 12L130.7 10L132.7 12Z" fill="#202020"/><path d="M166.6 9V11M164.6 12H168.6" stroke="#202020" stroke-width="1"/><path d="M164.6 12L166.6 10L168.6 12Z" fill="#202020"/><path d="M202.5 9V11M200.5 12H204.5" stroke="#202020" stroke-width="1"/><path d="M200.5 12L202.5 10L204.5 12Z" fill="#202020"/><path d="M238.4 9V11M236.4 12H240.4" stroke="#202020" stroke-width="1"/><path d="M236.4 12L238.4 10L240.4 12Z" fill="#202020"/><path d="M274.3 9V11M272.3 12H276.3" stroke="#202020" stroke-width="1"/><path d="M272.3 12L274.3 10L276.3 12Z" fill="#202020"/><path d="M310.2 9V11M308.2 12H312.2" stroke="#202020" stroke-width="1"/><path d="M308.2 12L310.2 10L312.2 12Z" fill="#202020"/></svg>
<svg class="a" style="left:10px;top:138px;" width="12" height="268" viewBox="0 0 12 268"><rect x="6" y="7.9" width="1" height="1" fill="#505050"/><rect x="5.5" y="15.1" width="2" height="1.2" fill="#404040"/><rect x="6" y="22.4" width="1" height="1" fill="#505050"/><rect x="6" y="36.8" width="1" height="1" fill="#505050"/><rect x="5.5" y="44.0" width="2" height="1.2" fill="#404040"/><rect x="6" y="51.3" width="1" height="1" fill="#505050"/><rect x="6" y="65.7" width="1" height="1" fill="#505050"/><rect x="5.5" y="72.8" width="2" height="1.2" fill="#404040"/><rect x="6" y="80.2" width="1" height="1" fill="#505050"/><rect x="6" y="94.6" width="1" height="1" fill="#505050"/><rect x="5.5" y="101.8" width="2" height="1.2" fill="#404040"/><rect x="6" y="109.1" width="1" height="1" fill="#505050"/><rect x="6" y="123.5" width="1" height="1" fill="#505050"/><rect x="5.5" y="130.7" width="2" height="1.2" fill="#404040"/><rect x="6" y="138.0" width="1" height="1" fill="#505050"/><rect x="6" y="152.4" width="1" height="1" fill="#505050"/><rect x="5.5" y="159.5" width="2" height="1.2" fill="#404040"/><rect x="6" y="166.9" width="1" height="1" fill="#505050"/><rect x="6" y="181.3" width="1" height="1" fill="#505050"/><rect x="5.5" y="188.4" width="2" height="1.2" fill="#404040"/><rect x="6" y="195.8" width="1" height="1" fill="#505050"/><rect x="6" y="210.2" width="1" height="1" fill="#505050"/><rect x="5.5" y="217.3" width="2" height="1.2" fill="#404040"/><rect x="6" y="224.7" width="1" height="1" fill="#505050"/><rect x="6" y="239.1" width="1" height="1" fill="#505050"/><rect x="5.5" y="246.3" width="2" height="1.2" fill="#404040"/><text x="0" y="0" font-size="8" font-family="Liberation Sans" fill="#0a1020" stroke="#0a1020" stroke-width="0.25" text-anchor="middle" transform="translate(11 30.1) rotate(-90)">1</text><text x="0" y="0" font-size="8" font-family="Liberation Sans" fill="#0a1020" stroke="#0a1020" stroke-width="0.25" text-anchor="middle" transform="translate(11 87.9) rotate(-90)">1</text><text x="0" y="0" font-size="8" font-family="Liberation Sans" fill="#0a1020" stroke="#0a1020" stroke-width="0.25" text-anchor="middle" transform="translate(11 116.8) rotate(-90)">2</text><text x="0" y="0" font-size="8" font-family="Liberation Sans" fill="#0a1020" stroke="#0a1020" stroke-width="0.25" text-anchor="middle" transform="translate(11 145.7) rotate(-90)">3</text><text x="0" y="0" font-size="8" font-family="Liberation Sans" fill="#0a1020" stroke="#0a1020" stroke-width="0.25" text-anchor="middle" transform="translate(11 174.6) rotate(-90)">4</text><text x="0" y="0" font-size="8" font-family="Liberation Sans" fill="#0a1020" stroke="#0a1020" stroke-width="0.25" text-anchor="middle" transform="translate(11 203.5) rotate(-90)">5</text><text x="0" y="0" font-size="8" font-family="Liberation Sans" fill="#0a1020" stroke="#0a1020" stroke-width="0.25" text-anchor="middle" transform="translate(11 232.4) rotate(-90)">6</text></svg>
<svg class="a" style="left:371px;top:95px;" width="9" height="5" viewBox="0 0 9 5"><path d="M0.5 4.5L4.5 0.5L8.5 4.5Z" fill="#9a9a9a"/></svg>
<svg class="a" style="left:371px;top:356px;" width="9" height="5" viewBox="0 0 9 5"><path d="M0.5 0.5L4.5 4.5L8.5 0.5Z" fill="#9a9a9a"/></svg>
<div class="a" style="left:369px;top:366px;width:12px;height:12px;background:#fafafa;border:1px solid #b0b0b0"></div>
<svg class="a" style="left:370px;top:367px;" width="10" height="10" viewBox="0 0 10 10"><path d="M1.5 5L5 2L8.5 5ZM1.5 8.5L5 5.5L8.5 8.5Z" fill="#101010"/></svg>
<div class="a" style="left:369px;top:379px;width:12px;height:12px;background:#fafafa;border:1px solid #b0b0b0"></div>
<svg class="a" style="left:370px;top:380px;" width="10" height="10" viewBox="0 0 10 10"><circle cx="5" cy="5" r="3" fill="#6a9ad0" stroke="#2a5a98" stroke-width="0.9"/><circle cx="5" cy="5" r="1.2" fill="#c0d8f4"/></svg>
<div class="a" style="left:369px;top:392px;width:12px;height:12px;background:#fafafa;border:1px solid #b0b0b0"></div>
<svg class="a" style="left:370px;top:393px;" width="10" height="10" viewBox="0 0 10 10"><path d="M1.5 1.5L5 4.5L8.5 1.5ZM1.5 5L5 8L8.5 5Z" fill="#101010"/></svg>
<svg class="a" style="left:12px;top:408px;" width="5" height="9" viewBox="0 0 5 9"><path d="M4.5 0.5L0.5 4.5L4.5 8.5Z" fill="#9a9a9a"/></svg>
<svg class="a" style="left:360px;top:408px;" width="5" height="9" viewBox="0 0 5 9"><path d="M0.5 0.5L4.5 4.5L0.5 8.5Z" fill="#9a9a9a"/></svg>
<svg class="a" style="left:552px;top:96px;" width="8" height="8" viewBox="0 0 8 8"><path d="M0.8 0.8L7.2 7.2M7.2 0.8L0.8 7.2" stroke="#404040" stroke-width="1.3"/></svg>
<svg class="a" style="left:574px;top:99px;" width="9" height="9" viewBox="0 0 9 9"><rect x="1" y="1" width="5" height="1" fill="#6a7078"/><rect x="1" y="3" width="5" height="1" fill="#6a7078"/><rect x="1" y="5" width="5" height="1" fill="#6a7078"/><path d="M4.5 6H8.5L6.5 8.5Z" fill="#111"/></svg>
<div class="a" style="left:566px;top:121px;width:25px;height:24px;border:1px solid #c0c0c0;border-radius:2px;background:linear-gradient(#fafafa,#e8e8e8)"></div>
<svg class="a" style="left:570px;top:124px;" width="17" height="18" viewBox="0 0 17 18"><path d="M8 1L15.5 5V13L8 17L0.5 13V5Z" fill="#1a90f0"/><path d="M8 9L15.5 5V13L8 17Z" fill="#60d020"/><path d="M8 1L15.5 5L8 9L4.2 7Z" fill="#50c8f8"/><path d="M11.8 3L15.5 5L11.8 7L8 5Z" fill="#80e040"/><path d="M4.2 11L8 9V17L4.2 15Z" fill="#50d018"/><path d="M4.2 11L8 9L11.8 11L8 13Z" fill="#90e850"/><path d="M4.2 3V15M8 9V17M11.8 7V15M0.5 9L4.2 11M8 13L15.5 9M4.2 7L11.8 3" stroke="#fff" stroke-width="0.6" opacity="0.8"/></svg>
<svg class="a" style="left:569px;top:150px;" width="19" height="20" viewBox="0 0 19 20"><ellipse cx="9.5" cy="17.5" rx="6" ry="1.3" fill="#b8b8b8" opacity="0.7"/><circle cx="3" cy="8" r="1.8" fill="#f040c0"/><circle cx="9" cy="3" r="1.8" fill="#c060e0"/><path d="M15 1L15.8 3L18 3.2L16.3 4.6L16.8 6.8L15 5.6L13.2 6.8L13.7 4.6L12 3.2L14.2 3Z" fill="#f8c820"/><circle cx="16" cy="11" r="1.6" fill="#f04080"/><path d="M4 5Q9 2 12 6L13 14L4 16Z" fill="#1a4a90"/><path d="M5 7Q9 5 11 8L11 13L6 14Z" fill="#2aa0e8"/><path d="M11 10Q15 10 14 15Q12 14 11 12Z" fill="#40b030"/><path d="M6 3Q8 1 9 5" fill="#f09020"/></svg>
<svg class="a" style="left:569px;top:177px;" width="19" height="18" viewBox="0 0 19 18"><ellipse cx="10" cy="16" rx="7" ry="1.3" fill="#b8b8b8" opacity="0.7"/><g transform="rotate(-20 9.5 8.5)"><rect x="2" y="3" width="14" height="11" fill="#fff" stroke="#a0a8b0" stroke-width="0.8"/><rect x="4" y="5" width="10" height="7" fill="#50a8f0"/><path d="M4 12L8 8L11 10L14 8V12Z" fill="#48a830"/><rect x="9" y="6" width="3" height="2" fill="#fff"/></g></svg>
<svg class="a" style="left:570px;top:205px;" width="17" height="18" viewBox="0 0 17 18"><circle cx="8.5" cy="8.5" r="7.2" fill="#fff" stroke="#f0a010" stroke-width="2"/><circle cx="8.5" cy="8.5" r="6" fill="none" stroke="#c88008" stroke-width="0.4"/><path d="M8.5 8.5L12.5 4L9.8 9.8Z" fill="#e02020"/><path d="M8.5 8.5L4.5 13L7.2 7.2Z" fill="#2a70e0"/><text x="8.5" y="5" font-size="3.5" font-family="Liberation Sans" font-weight="bold" fill="#333" text-anchor="middle">N</text></svg>
<div class="a" style="left:396px;top:135px;width:116px;height:16px;background:#fff;border:1px solid #b9bcc2;border-top-color:#a9acb2"></div>
<div class="a" style="left:496px;top:136px;width:15px;height:14px;background:#fcfcfc;border:1px solid #cfcfcf;box-shadow:inset 0 0 0 1px #eeeeee"></div>
<svg class="a" style="left:501.0px;top:139.5px;" width="5" height="7" viewBox="0 0 5 7"><path d="M0.5 2.5L2.5 0.5L4.5 2.5Z" fill="#666"/><path d="M0.5 4.5L2.5 6.5L4.5 4.5Z" fill="#666"/></svg>
<div class="t" style="left:400px;top:139.38px;font-size:9px;color:#000;transform:scaleX(0.932);transform-origin:0 0;">Times New Roman</div>
<div class="a" style="left:516px;top:135px;width:39px;height:16px;background:#fff;border:1px solid #b9bcc2;border-top-color:#a9acb2"></div>
<div class="a" style="left:539px;top:136px;width:15px;height:14px;background:#fcfcfc;border:1px solid #cfcfcf;box-shadow:inset 0 0 0 1px #eeeeee"></div>
<svg class="a" style="left:544.0px;top:139.5px;" width="5" height="7" viewBox="0 0 5 7"><path d="M0.5 2.5L2.5 0.5L4.5 2.5Z" fill="#666"/><path d="M0.5 4.5L2.5 6.5L4.5 4.5Z" fill="#666"/></svg>
<div class="t" style="left:520px;top:139.38px;font-size:9px;color:#000;transform:scaleX(0.999);transform-origin:0 0;">12</div>
<div class="a" style="left:396px;top:156px;width:106px;height:22px;background:#f8f8f8;border:1px solid #e6e6e6"></div>
<svg class="a" style="left:400px;top:163px;" width="12" height="10" viewBox="0 0 12 10"><text x="6" y="9" font-size="11" font-family="Liberation Serif" font-weight="bold" fill="#111" text-anchor="middle">Ж</text></svg>
<svg class="a" style="left:419px;top:159px;" width="11" height="13" viewBox="0 0 11 13"><text x="0" y="11" font-size="13" font-family="Liberation Serif" font-style="italic" font-weight="bold" fill="#111">K</text></svg>
<svg class="a" style="left:439px;top:158px;" width="10" height="15" viewBox="0 0 10 15"><text x="0.5" y="10.5" font-size="11" font-family="Liberation Serif" font-weight="bold" fill="#111">Ч</text><rect x="0" y="12.5" width="9" height="1.2" fill="#222"/></svg>
<svg class="a" style="left:456px;top:166px;" width="5" height="3" viewBox="0 0 5 3"><path d="M0 0H5L2.5 3Z" fill="#111"/></svg>
<svg class="a" style="left:466px;top:162px;" width="13" height="8" viewBox="0 0 13 8"><text x="6.5" y="6" font-size="5" font-family="Liberation Sans" font-weight="bold" fill="#506070" text-anchor="middle">ABC</text><rect x="0.5" y="3.5" width="12" height="1" fill="#333"/></svg>
<svg class="a" style="left:484px;top:159px;" width="14" height="14" viewBox="0 0 14 14"><text x="9" y="13" font-size="13" font-family="Liberation Sans" font-weight="bold" fill="#9aa4b0" text-anchor="middle">A</text><text x="6" y="12" font-size="13" font-family="Liberation Sans" font-weight="bold" fill="#3a7ab8" text-anchor="middle">A</text></svg>
<div class="a" style="left:517px;top:156px;width:40px;height:22px;background:#f8f8f8;border:1px solid #e6e6e6"></div>
<svg class="a" style="left:520px;top:158px;" width="14" height="16" viewBox="0 0 14 16"><rect x="0.5" y="3.5" width="3" height="11" fill="#fff" stroke="#6a7a90"/><text x="8.5" y="14" font-size="11" font-family="Liberation Sans" font-weight="bold" fill="#2a5a90" text-anchor="middle">A</text><path d="M7 4L10 1L13 4Z" fill="#e06030"/></svg>
<svg class="a" style="left:539px;top:158px;" width="14" height="16" viewBox="0 0 14 16"><rect x="0.5" y="3.5" width="3" height="11" fill="#fff" stroke="#6a7a90"/><text x="8.5" y="15" font-size="9" font-family="Liberation Sans" font-weight="bold" fill="#2a5a90" text-anchor="middle">A</text><path d="M7 2L10 5L13 2Z" fill="#e06030"/></svg>
<div class="a" style="left:396px;top:183px;width:41px;height:22px;background:#f8f8f8;border:1px solid #e6e6e6"></div>
<svg class="a" style="left:400px;top:186px;" width="14" height="16" viewBox="0 0 14 16"><text x="5" y="14" font-size="11" font-family="Liberation Sans" font-weight="bold" fill="#8a949e" text-anchor="middle">A</text><text x="9.5" y="11" font-size="9" font-family="Liberation Sans" font-weight="bold" fill="#2a5a90" text-anchor="middle">A</text><path d="M6.5 12L9.5 15L12.5 12Z" fill="#e06030"/></svg>
<svg class="a" style="left:419px;top:186px;" width="14" height="16" viewBox="0 0 14 16"><text x="5" y="14" font-size="11" font-family="Liberation Sans" font-weight="bold" fill="#8a949e" text-anchor="middle">A</text><text x="9.5" y="14" font-size="9" font-family="Liberation Sans" font-weight="bold" fill="#2a5a90" text-anchor="middle">A</text><path d="M6.5 2L9.5 5L12.5 2Z" fill="#e06030"/></svg>
<div class="a" style="left:442px;top:183px;width:30px;height:22px;background:#f8f8f8;border:1px solid #e6e6e6"></div>
<svg class="a" style="left:445px;top:186px;" width="13" height="16" viewBox="0 0 13 16"><text x="3" y="8" font-size="7" font-family="Liberation Sans" font-weight="bold" fill="#2a3a50" text-anchor="middle">A</text><text x="10" y="8" font-size="7" font-family="Liberation Sans" font-weight="bold" fill="#2a3a50" text-anchor="middle">V</text><path d="M4 1L8 10" stroke="#e02020" stroke-width="1"/><path d="M1 12H12" stroke="#2a70c0" stroke-width="1.5"/><circle cx="2.5" cy="12" r="2" fill="#2a70c0"/><circle cx="10.5" cy="12" r="2" fill="#2a70c0"/></svg>
<svg class="a" style="left:463px;top:193px;" width="5" height="3" viewBox="0 0 5 3"><path d="M0 0H5L2.5 3Z" fill="#111"/></svg>
<div class="a" style="left:485px;top:183px;width:29px;height:22px;background:#f8f8f8;border:1px solid #e6e6e6"></div>
<svg class="a" style="left:488px;top:186px;" width="12" height="15" viewBox="0 0 12 15"><text x="6" y="10" font-size="11" font-family="Liberation Sans" font-weight="bold" fill="#2a5a90" text-anchor="middle">A</text><rect x="0" y="11.5" width="12" height="2.5" fill="#a01010"/></svg>
<svg class="a" style="left:507px;top:193px;" width="5" height="3" viewBox="0 0 5 3"><path d="M0 0H5L2.5 3Z" fill="#111"/></svg>
<div class="a" style="left:519px;top:183px;width:30px;height:22px;background:#f8f8f8;border:1px solid #e6e6e6"></div>
<svg class="a" style="left:521px;top:186px;" width="13" height="15" viewBox="0 0 13 15"><rect x="0" y="0.5" width="8" height="7" fill="#f8e020"/><text x="1" y="6" font-size="5" font-family="Liberation Sans" fill="#404040">ab</text><path d="M6 9L11.5 2.5" stroke="#808890" stroke-width="2.5"/><path d="M6.5 8.5L11 3" stroke="#f8f8f8" stroke-width="1.2"/><rect x="0" y="11" width="12" height="3" fill="#f8f020"/></svg>
<svg class="a" style="left:540px;top:193px;" width="5" height="3" viewBox="0 0 5 3"><path d="M0 0H5L2.5 3Z" fill="#111"/></svg>
<div class="a" style="left:397px;top:225px;width:78px;height:23px;background:#f8f8f8;border:1px solid #e6e6e6"></div>
<div class="a" style="left:398px;top:228px;width:18px;height:19px;background:#fff;border:1px solid #b8b8b8"></div>
<svg class="a" style="left:402px;top:233px;" width="10" height="8" viewBox="0 0 10 8"><rect x="0" y="0" width="10" height="8" fill="#fff" opacity="0.7"/><rect x="0" y="0.3" width="10" height="1.5" fill="#4a5460"/><rect x="0" y="2.3" width="6.5" height="1.5" fill="#4a5460"/><rect x="0" y="4.3" width="10" height="1.5" fill="#4a5460"/><rect x="0" y="6.3" width="6.5" height="1.5" fill="#4a5460"/></svg>
<svg class="a" style="left:421px;top:233px;" width="10" height="8" viewBox="0 0 10 8"><rect x="0" y="0" width="10" height="8" fill="#fff" opacity="0.7"/><rect x="0" y="0.3" width="10" height="1.5" fill="#4a5460"/><rect x="1.8" y="2.3" width="6.5" height="1.5" fill="#4a5460"/><rect x="0" y="4.3" width="10" height="1.5" fill="#4a5460"/><rect x="1.8" y="6.3" width="6.5" height="1.5" fill="#4a5460"/></svg>
<svg class="a" style="left:440px;top:233px;" width="10" height="8" viewBox="0 0 10 8"><rect x="0" y="0" width="10" height="8" fill="#fff" opacity="0.7"/><rect x="0" y="0.3" width="10" height="1.5" fill="#4a5460"/><rect x="3.5" y="2.3" width="6.5" height="1.5" fill="#4a5460"/><rect x="0" y="4.3" width="10" height="1.5" fill="#4a5460"/><rect x="3.5" y="6.3" width="6.5" height="1.5" fill="#4a5460"/></svg>
<svg class="a" style="left:459px;top:233px;" width="10" height="8" viewBox="0 0 10 8"><rect x="0" y="0" width="10" height="8" fill="#fff" opacity="0.7"/><rect x="0" y="0.3" width="10" height="1.5" fill="#4a5460"/><rect x="0" y="2.3" width="10" height="1.5" fill="#4a5460"/><rect x="0" y="4.3" width="10" height="1.5" fill="#4a5460"/><rect x="0" y="6.3" width="10" height="1.5" fill="#4a5460"/></svg>
<div class="a" style="left:397px;top:249px;width:56px;height:23px;background:#f8f8f8;border:1px solid #e6e6e6"></div>
<svg class="a" style="left:400px;top:255px;" width="12" height="11" viewBox="0 0 12 11"><circle cx="1.8" cy="2.5" r="1.6" fill="#2a5a90"/><circle cx="1.8" cy="8.5" r="1.6" fill="#2a5a90"/><rect x="4.5" y="1.5" width="7" height="1.4" fill="#4a5460"/><rect x="4.5" y="3.5" width="5" height="1" fill="#8a94a0"/><rect x="4.5" y="7.5" width="7" height="1.4" fill="#4a5460"/><rect x="4.5" y="9.5" width="5" height="1" fill="#8a94a0"/></svg>
<svg class="a" style="left:418px;top:259px;" width="5" height="3" viewBox="0 0 5 3"><path d="M0 0H5L2.5 3Z" fill="#111"/></svg>
<svg class="a" style="left:428px;top:255px;" width="12" height="11" viewBox="0 0 12 11"><text x="0" y="4.5" font-size="4.5" font-family="Liberation Sans" fill="#2a60a0">1</text><text x="0" y="10.5" font-size="4.5" font-family="Liberation Sans" fill="#2a60a0">2</text><rect x="4" y="1.5" width="7" height="1.4" fill="#4a5460"/><rect x="4" y="3.5" width="5" height="1" fill="#8a94a0"/><rect x="4" y="7.5" width="7" height="1.4" fill="#4a5460"/><rect x="4" y="9.5" width="5" height="1" fill="#8a94a0"/></svg>
<svg class="a" style="left:446px;top:259px;" width="5" height="3" viewBox="0 0 5 3"><path d="M0 0H5L2.5 3Z" fill="#111"/></svg>
<div class="a" style="left:467px;top:249px;width:39px;height:23px;background:#f8f8f8;border:1px solid #e6e6e6"></div>
<svg class="a" style="left:469px;top:253px;" width="11" height="13" viewBox="0 0 11 13"><path d="M1 6L5 2L10 7L6 11Z" fill="#a8d0f0" stroke="#3a70b0" stroke-width="0.8"/><path d="M5 2Q8 0 10 4" fill="none" stroke="#333" stroke-width="0.8"/><path d="M9 8Q11 11 10 12" fill="none" stroke="#3a70b0" stroke-width="1.3"/></svg>
<div class="a" style="left:481px;top:254px;width:12px;height:13px;border:1.5px solid #3a4a60;background:#f4f4f4;box-shadow:inset 0 0 0 1px #d0d8e4"></div>
<svg class="a" style="left:499px;top:259px;" width="5" height="3" viewBox="0 0 5 3"><path d="M0 0H5L2.5 3Z" fill="#111"/></svg>
<div class="t" style="left:396px;top:272.38px;font-size:9px;color:#1a1a1a;font-weight:bold;transform:scaleX(0.892);transform-origin:0 0;">Интервал:</div>
<div class="t" style="left:482px;top:272.38px;font-size:9px;color:#1a1a1a;font-weight:bold;transform:scaleX(0.844);transform-origin:0 0;">Отступ:</div>
<div class="a" style="left:397px;top:282px;width:40px;height:23px;background:#f8f8f8;border:1px solid #e6e6e6"></div>
<svg class="a" style="left:400px;top:287px;" width="13" height="12" viewBox="0 0 13 12"><path d="M0.5 4Q3 -0.5 5.5 4Z" fill="#2a70c0"/><path d="M0.5 7.5Q3 12 5.5 7.5Z" fill="#2a70c0"/><rect x="0.5" y="4.5" width="5" height="1" fill="#2a70c0"/><rect x="0.5" y="6.5" width="5" height="1" fill="#2a70c0"/><path d="M6.5 1H13M6.5 3H13M6.5 8H13M6.5 10H13" stroke="#70787f" stroke-width="1.6"/></svg>
<svg class="a" style="left:419px;top:287px;" width="13" height="12" viewBox="0 0 13 12"><path d="M0.5 0.5Q3 5 5.5 0.5Z" fill="#2a70c0"/><path d="M0.5 11.5Q3 6.5 5.5 11.5Z" fill="#2a70c0"/><rect x="0.5" y="4.5" width="5" height="1" fill="#2a70c0"/><rect x="0.5" y="6.5" width="5" height="1" fill="#2a70c0"/><path d="M6.5 1H13M6.5 3H13M6.5 8H13M6.5 10H13" stroke="#70787f" stroke-width="1.6"/></svg>
<div class="a" style="left:482px;top:282px;width:64px;height:23px;background:#f8f8f8;border:1px solid #e6e6e6"></div>
<svg class="a" style="left:485px;top:287px;" width="14" height="12" viewBox="0 0 14 12"><path d="M0.5 6L4.5 2.5V9.5Z" fill="#e05010"/><rect x="3" y="4.8" width="4" height="2.4" fill="#e05010"/><path d="M6 1.5H13M7 3.5H13M7 5.5H13M7 7.5H13M7 9.5H13M6 11.5H13" stroke="#2a80d0" stroke-width="1"/><path d="M6 1.5H13M6 11.5H13" stroke="#606870" stroke-width="1"/></svg>
<svg class="a" style="left:504px;top:287px;" width="14" height="12" viewBox="0 0 14 12"><path d="M0.5 6L4.5 2.5V9.5Z" fill="#e05010"/><rect x="3" y="4.8" width="4" height="2.4" fill="#e05010"/><path d="M6 1.5H13M7 3.5H13M7 5.5H13M7 7.5H13M7 9.5H13M6 11.5H13" stroke="#2a80d0" stroke-width="1"/><path d="M6 1.5H13M6 11.5H13" stroke="#606870" stroke-width="1"/></svg>
<svg class="a" style="left:524px;top:287px;" width="17" height="12" viewBox="0 0 17 12"><path d="M0.5 5L4 2V4H7V6H4V8Z" fill="#40b030" stroke="#208010" stroke-width="0.5"/><path d="M8 1H10M8 3H9" stroke="#606870"/><rect x="11" y="0.5" width="4" height="11" fill="#c0d0e0" stroke="#8aa0b8"/></svg>
<div class="a" style="left:411px;top:311px;width:66px;height:15px;background:#fff;border:1px solid #abadb3"></div>
<div class="a" style="left:463px;top:312px;width:13px;height:13px;background:#f4f4f4;border-left:1px solid #d8d8d8"></div>
<div class="a" style="left:464px;top:318px;width:12px;height:1px;background:#e0e0e0"></div>
<svg class="a" style="left:467px;top:314px;" width="6" height="9" viewBox="0 0 6 9"><path d="M0.5 2.5L3 0.5L5.5 2.5Z" fill="#666"/><path d="M0.5 6.5L3 8.5L5.5 6.5Z" fill="#666"/></svg>
<div class="t" style="left:413px;top:314.88px;font-size:9px;color:#000;transform:scaleX(0.912);transform-origin:0 0;">0,00 см</div>
<div class="a" style="left:411px;top:331px;width:66px;height:15px;background:#fff;border:1px solid #abadb3"></div>
<div class="a" style="left:463px;top:332px;width:13px;height:13px;background:#f4f4f4;border-left:1px solid #d8d8d8"></div>
<div class="a" style="left:464px;top:338px;width:12px;height:1px;background:#e0e0e0"></div>
<svg class="a" style="left:467px;top:334px;" width="6" height="9" viewBox="0 0 6 9"><path d="M0.5 2.5L3 0.5L5.5 2.5Z" fill="#666"/><path d="M0.5 6.5L3 8.5L5.5 6.5Z" fill="#666"/></svg>
<div class="t" style="left:413px;top:334.88px;font-size:9px;color:#000;transform:scaleX(0.912);transform-origin:0 0;">0,00 см</div>
<div class="a" style="left:496px;top:311px;width:62px;height:15px;background:#fff;border:1px solid #abadb3"></div>
<div class="a" style="left:544px;top:312px;width:13px;height:13px;background:#f4f4f4;border-left:1px solid #d8d8d8"></div>
<div class="a" style="left:545px;top:318px;width:12px;height:1px;background:#e0e0e0"></div>
<svg class="a" style="left:548px;top:314px;" width="6" height="9" viewBox="0 0 6 9"><path d="M0.5 2.5L3 0.5L5.5 2.5Z" fill="#666"/><path d="M0.5 6.5L3 8.5L5.5 6.5Z" fill="#666"/></svg>
<div class="t" style="left:498px;top:314.88px;font-size:9px;color:#000;transform:scaleX(0.912);transform-origin:0 0;">0,00 см</div>
<div class="a" style="left:496px;top:332px;width:62px;height:15px;background:#fff;border:1px solid #abadb3"></div>
<div class="a" style="left:544px;top:333px;width:13px;height:13px;background:#f4f4f4;border-left:1px solid #d8d8d8"></div>
<div class="a" style="left:545px;top:339px;width:12px;height:1px;background:#e0e0e0"></div>
<svg class="a" style="left:548px;top:335px;" width="6" height="9" viewBox="0 0 6 9"><path d="M0.5 2.5L3 0.5L5.5 2.5Z" fill="#666"/><path d="M0.5 6.5L3 8.5L5.5 6.5Z" fill="#666"/></svg>
<div class="t" style="left:498px;top:335.88px;font-size:9px;color:#000;transform:scaleX(0.912);transform-origin:0 0;">0,00 см</div>
<div class="a" style="left:496px;top:353px;width:62px;height:15px;background:#fff;border:1px solid #abadb3"></div>
<div class="a" style="left:544px;top:354px;width:13px;height:13px;background:#f4f4f4;border-left:1px solid #d8d8d8"></div>
<div class="a" style="left:545px;top:360px;width:12px;height:1px;background:#e0e0e0"></div>
<svg class="a" style="left:548px;top:356px;" width="6" height="9" viewBox="0 0 6 9"><path d="M0.5 2.5L3 0.5L5.5 2.5Z" fill="#666"/><path d="M0.5 6.5L3 8.5L5.5 6.5Z" fill="#666"/></svg>
<div class="t" style="left:498px;top:356.88px;font-size:9px;color:#000;transform:scaleX(0.912);transform-origin:0 0;">0,00 см</div>
<svg class="a" style="left:396px;top:312px;" width="11" height="13" viewBox="0 0 11 13"><path d="M5.5 0.5V5M3 0.5H8" stroke="#2a5a98" stroke-width="1"/><rect x="0" y="6" width="11" height="1.4" fill="#2a5a98"/><rect x="0" y="8.5" width="11" height="1.4" fill="#2a5a98"/><rect x="0" y="11" width="11" height="1.4" fill="#2a5a98"/></svg>
<svg class="a" style="left:396px;top:332px;" width="11" height="13" viewBox="0 0 11 13"><rect x="0" y="0.5" width="11" height="1.4" fill="#2a5a98"/><rect x="0" y="3" width="11" height="1.4" fill="#2a5a98"/><path d="M5.5 5.5V11.5M3 11.5H8" stroke="#2a5a98" stroke-width="1"/></svg>
<div class="a" style="left:397px;top:352px;width:30px;height:22px;background:#f8f8f8;border:1px solid #e6e6e6"></div>
<svg class="a" style="left:400px;top:357px;" width="13" height="11" viewBox="0 0 13 11"><path d="M2 1V10" stroke="#2a5a98" stroke-width="1"/><path d="M0 3L2 0.5L4 3ZM0 8L2 10.5L4 8Z" fill="#2a5a98"/><rect x="5" y="2" width="8" height="1.4" fill="#2a5a98"/><rect x="5" y="4.8" width="8" height="1.4" fill="#2a5a98"/><rect x="5" y="7.6" width="8" height="1.4" fill="#2a5a98"/></svg>
<svg class="a" style="left:419px;top:361px;" width="5" height="3" viewBox="0 0 5 3"><path d="M0 0H5L2.5 3Z" fill="#111"/></svg>
<svg class="a" style="left:481px;top:312px;" width="12" height="13" viewBox="0 0 12 13"><path d="M0 1.5H4M0 0.5V2.5M4 0.5V2.5" stroke="#2a5a98" stroke-width="0.9"/><rect x="6" y="1" width="6" height="1.3" fill="#2a5a98"/><rect x="6" y="4" width="6" height="1.3" fill="#2a5a98"/><rect x="6" y="7" width="6" height="1.3" fill="#2a5a98"/><rect x="6" y="10" width="6" height="1.3" fill="#2a5a98"/></svg>
<svg class="a" style="left:481px;top:333px;" width="12" height="13" viewBox="0 0 12 13"><path d="M8 1.5H12M8 0.5V2.5M12 0.5V2.5" stroke="#2a5a98" stroke-width="0.9"/><rect x="0" y="1" width="6" height="1.3" fill="#2a5a98"/><rect x="0" y="4" width="6" height="1.3" fill="#2a5a98"/><rect x="0" y="7" width="6" height="1.3" fill="#2a5a98"/><rect x="0" y="10" width="6" height="1.3" fill="#2a5a98"/></svg>
<svg class="a" style="left:481px;top:354px;" width="12" height="13" viewBox="0 0 12 13"><rect x="3" y="0.5" width="9" height="1.3" fill="#2a5a98"/><rect x="0" y="3" width="12" height="1.3" fill="#2a5a98"/><rect x="0" y="5.5" width="12" height="1.3" fill="#2a5a98"/><rect x="0" y="8" width="12" height="1.3" fill="#2a5a98"/><rect x="0" y="10.5" width="12" height="1.3" fill="#2a5a98"/></svg>
<svg class="a" style="left:383px;top:239px;" width="4" height="28" viewBox="0 0 4 28"><path d="M0.5 0.5L3 2.5L0.5 4.5Z" fill="#303030"/><rect x="1" y="7" width="2" height="2" fill="#808080"/><rect x="1" y="10" width="2" height="2" fill="#808080"/><rect x="1" y="13" width="2" height="2" fill="#808080"/><rect x="1" y="16" width="2" height="2" fill="#808080"/><rect x="1" y="19" width="2" height="2" fill="#808080"/><path d="M0.5 23.5L3 25.5L0.5 27.5Z" fill="#303030"/></svg>
<svg class="a" style="left:398px;top:422px;" width="7" height="9" viewBox="0 0 7 9"><path d="M0.5 0.5H4.5L6.5 2.5V8.5H0.5Z" fill="#fbfbfb" stroke="#8a96a8"/></svg>
<svg class="a" style="left:409px;top:422px;" width="15" height="9" viewBox="0 0 15 9"><rect x="0.5" y="0.5" width="6.5" height="8" fill="#dce8f6" stroke="#3a6ab0"/><rect x="7.5" y="0.5" width="6.5" height="8" fill="#dce8f6" stroke="#3a6ab0"/><rect x="2" y="1.5" width="3" height="2" fill="#3a6ab0"/><rect x="9" y="1.5" width="3" height="2" fill="#3a6ab0"/></svg>
<svg class="a" style="left:429px;top:422px;" width="13" height="9" viewBox="0 0 13 9"><rect x="0.5" y="0.5" width="5.5" height="8" fill="#fbfbfb" stroke="#8a96a8"/><rect x="6.5" y="0.5" width="5.5" height="8" fill="#fbfbfb" stroke="#8a96a8"/></svg>
<svg class="a" style="left:454px;top:423px;" width="9" height="9" viewBox="0 0 9 9"><circle cx="4.5" cy="4.5" r="3.8" fill="#dfe8f2" stroke="#3a4a60" stroke-width="1.2"/><rect x="2.5" y="4" width="4" height="1.2" fill="#1a3a6a"/></svg>
<div class="a" style="left:467px;top:426px;width:75px;height:1px;background:#8a9098"></div>
<div class="a" style="left:469px;top:423px;width:1px;height:7px;background:#8a9098"></div>
<svg class="a" style="left:501px;top:424px;" width="6" height="7" viewBox="0 0 6 7"><path d="M3 0.5L5.5 1.5V4.5L3 6.5L0.5 4.5V1.5Z" fill="#4a78a8" stroke="#2a4a70" stroke-width="0.8"/></svg>
<svg class="a" style="left:545px;top:423px;" width="9" height="9" viewBox="0 0 9 9"><circle cx="4.5" cy="4.5" r="3.8" fill="#dfe8f2" stroke="#3a4a60" stroke-width="1.2"/><rect x="2.5" y="4" width="4" height="1.2" fill="#1a3a6a"/><rect x="3.9" y="2.5" width="1.2" height="4" fill="#1a3a6a"/></svg>
<svg class="a" style="left:551px;top:26px;" width="13" height="11" viewBox="0 0 13 11"><path d="M4 0.5H9V4H12L6.5 8.5L1 4H4Z" fill="#70c030" stroke="#3a8a10" stroke-width="0.7"/><rect x="0" y="8.5" width="13" height="2" fill="#3a6ab0"/><rect x="0" y="8" width="13" height="0.8" fill="#a0c8f0"/></svg>
<svg class="a" style="left:581px;top:29px;" width="7" height="7" viewBox="0 0 7 7"><path d="M0.7 0.7L6.3 6.3M6.3 0.7L0.7 6.3" stroke="#404850" stroke-width="1.3"/></svg>
<div class="a" style="left:516px;top:1px;width:78px;height:13px;border:1px solid #9cc8f4;border-top:none"></div>
<div class="a" style="left:523px;top:8px;width:8px;height:4px;background:#fff;border:1px solid #2a3a50;border-radius:1px"></div>
<div class="a" style="left:543px;top:4px;width:9px;height:8px;background:#fff;border:1px solid #2a3a50"></div>
<div class="a" style="left:546px;top:7px;width:3px;height:2px;background:#3a70c0"></div>
<svg class="a" style="left:572px;top:4px;" width="9" height="9" viewBox="0 0 9 9"><path d="M1.5 1.5L7.5 7.5M7.5 1.5L1.5 7.5" stroke="#2a3a50" stroke-width="3.2"/><path d="M1.5 1.5L7.5 7.5M7.5 1.5L1.5 7.5" stroke="#fff" stroke-width="1.6"/></svg>
<svg class="a" style="left:8px;top:5px;" width="12" height="13" viewBox="0 0 12 13"><path d="M1 1H8L11 4V12H1Z" fill="#f8f8f8" stroke="#606870" stroke-width="0.8"/><rect x="0" y="1" width="2" height="11" fill="#0a0e14"/><rect x="0" y="11" width="11" height="1.2" fill="#1a2028"/><path d="M3 3H7M3 5H9M3 7H9M3 9H9" stroke="#8a929c" stroke-width="0.9"/><path d="M8 1V4H11" fill="#c8ccd0" stroke="#606870" stroke-width="0.8"/></svg>
<div class="a" style="left:11px;top:36px;width:5px;height:1px;background:#101010"></div>
<div class="a" style="left:40px;top:36px;width:5px;height:1px;background:#101010"></div>
<div class="a" style="left:79px;top:36px;width:5px;height:1px;background:#101010"></div>
<div class="a" style="left:114px;top:36px;width:4px;height:1px;background:#101010"></div>
<div class="a" style="left:153px;top:36px;width:4px;height:1px;background:#101010"></div>
<div class="a" style="left:185px;top:36px;width:4px;height:1px;background:#101010"></div>
<div class="a" style="left:232px;top:36px;width:4px;height:1px;background:#101010"></div>
<div class="a" style="left:265px;top:36px;width:5px;height:1px;background:#101010"></div>
<div class="a" style="left:297px;top:36px;width:5px;height:1px;background:#101010"></div>
</body></html>
